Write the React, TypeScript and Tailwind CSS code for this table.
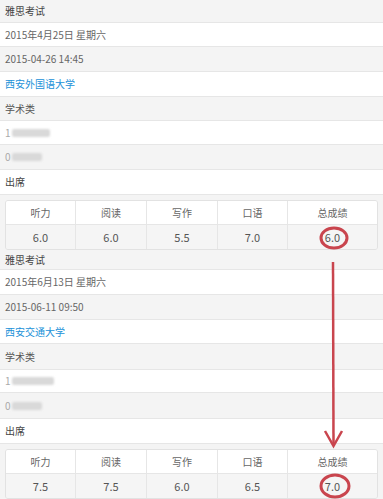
const font = { fontFamily: '"Noto Sans CJK SC", "Liberation Sans", sans-serif' };

type RowProps = { h: string; gray?: boolean; children: React.ReactNode };

function Row({ h, gray, children }: RowProps) {
  return (
    <div
      className={`${h} flex items-center border-b border-[#e6e6e6] px-[5px] text-[10px] leading-none ${
        gray ? 'bg-[#f4f4f4]' : 'bg-white'
      }`}
    >
      {children}
    </div>
  );
}

// masked personal data: first digit readable, the rest smeared out
function Blurred({ first, w }: { first: string; w: string }) {
  return (
    <span className="flex items-center text-[#aaa]">
      <span>{first}</span>
      <span className={`${w} ml-[1px] inline-block h-[8px] rounded-[2px] bg-[#d9d9d9] blur-[1px]`} />
    </span>
  );
}

function ScoreTable({ scores }: { scores: string[] }) {
  const heads = ['听力', '阅读', '写作', '口语', '总成绩'];
  return (
    <div className="bg-[#f4f4f4] px-[5px] pt-[5px]">
      <div className="grid grid-cols-[70px_71px_71px_70px_1fr] overflow-hidden rounded-[3px] border border-[#e2e2e2] text-[10px] leading-none">
        {heads.map((h, i) => (
          <div
            key={h}
            className={`flex h-[24px] items-center justify-center border-b border-[#e6e6e6] bg-white text-[#666] ${
              i < 4 ? 'border-r' : ''
            }`}
          >
            {h}
          </div>
        ))}
        {scores.map((s, i) => (
          <div
            key={i}
            className={`flex h-[24px] items-center justify-center border-[#e6e6e6] bg-[#f5f5f5] text-[11px] text-[#555] ${
              i < 4 ? 'border-r' : ''
            }`}
          >
            {s}
          </div>
        ))}
      </div>
    </div>
  );
}

function Block(props: {
  date: string;
  time: string;
  school: string;
  phoneW: string;
  idW: string;
  scores: string[];
  hs: string[];
}) {
  const { hs } = props;
  return (
    <div>
      <Row h={hs[0]} gray>
        <span className="text-[#444]">雅思考试</span>
      </Row>
      <Row h={hs[1]}>
        <span className="text-[#666]">{props.date}</span>
      </Row>
      <Row h={hs[2]} gray>
        <span className="text-[#666]">{props.time}</span>
      </Row>
      <Row h={hs[3]}>
        <span className="text-[#2191d8]">{props.school}</span>
      </Row>
      <Row h={hs[4]} gray>
        <span className="text-[#555]">学术类</span>
      </Row>
      <Row h={hs[5]}>
        <Blurred first="1" w={props.phoneW} />
      </Row>
      <Row h={hs[6]} gray>
        <Blurred first="0" w={props.idW} />
      </Row>
      <Row h={hs[7]}>
        <span className="text-[#444]">出席</span>
      </Row>
      <ScoreTable scores={props.scores} />
    </div>
  );
}

export default function App() {
  return (
    <div className="relative h-[499px] w-[383px] overflow-hidden bg-white" style={font}>
      <Block
        date="2015年4月25日 星期六"
        time="2015-04-26 14:45"
        school="西安外国语大学"
        phoneW="w-[38px]"
        idW="w-[30px]"
        scores={['6.0', '6.0', '5.5', '7.0', '6.0']}
        hs={['h-[23px]', 'h-[24px]', 'h-[25px]', 'h-[25px]', 'h-[24px]', 'h-[24px]', 'h-[25px]', 'h-[25px]']}
      />
      <Block
        date="2015年6月13日 星期六"
        time="2015-06-11 09:50"
        school="西安交通大学"
        phoneW="w-[42px]"
        idW="w-[30px]"
        scores={['7.5', '7.5', '6.0', '6.5', '7.0']}
        hs={['h-[20px]', 'h-[25px]', 'h-[25px]', 'h-[24px]', 'h-[26px]', 'h-[23px]', 'h-[26px]', 'h-[25px]']}
      />
      <svg className="pointer-events-none absolute inset-0" width="383" height="499">
        <ellipse cx="334" cy="238" rx="13" ry="10" fill="none" stroke="#c9454e" strokeWidth="3" />
        <ellipse cx="335" cy="486" rx="14" ry="11" fill="none" stroke="#c9454e" strokeWidth="3" />
        <line x1="333" y1="262" x2="333.5" y2="445" stroke="#c9454e" strokeWidth="2.5" />
        <polyline points="325,431 333.5,446 342,431" fill="none" stroke="#c9454e" strokeWidth="2.5" />
      </svg>
    </div>
  );
}
